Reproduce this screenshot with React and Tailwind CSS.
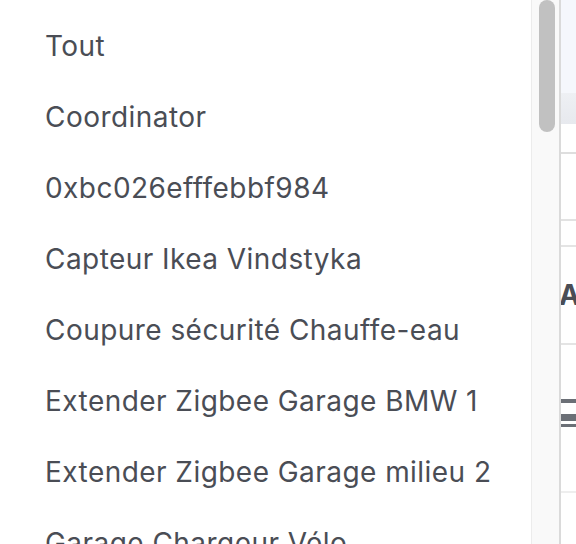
import React from 'react';

const devices = [
  'Tout',
  'Coordinator',
  '0xbc026efffebbf984',
  'Capteur Ikea Vindstyka',
  'Coupure sécurité Chauffe-eau',
  'Extender Zigbee Garage BMW 1',
  'Extender Zigbee Garage milieu 2',
  'Garage Chargeur Vélo',
];

// Dropdown list of devices
function DeviceList() {
  return (
    <ul className="flex-1 pt-[10px] overflow-hidden">
      {devices.map((name) => (
        <li
          key={name}
          className="h-[71px] flex items-center pl-[45px] whitespace-nowrap text-[28px] text-[#4a4d55] tracking-[0.45px]"
        >
          {name}
        </li>
      ))}
    </ul>
  );
}

// Scrollbar of the dropdown
function ScrollTrack() {
  return (
    <div className="w-[30px] shrink-0 bg-[#f9f9f9] border-l border-[#ececec] border-r-2 border-r-[#dadada] pl-[7px]">
      <div className="w-[16px] h-[132px] rounded-full bg-[#c1c1c1]" />
    </div>
  );
}

// Page content peeking out behind the dropdown
function PageEdge() {
  return (
    <div className="w-[15px] shrink-0 flex flex-col overflow-hidden">
      <div className="h-[93px] bg-[#f5f7fc]" />
      <div className="h-[31px] bg-gradient-to-b from-[#eef0f4] to-[#e7e9ee]" />
      <div className="h-[30px] border-b-2 border-[#dedede]" />
      <div className="h-[67px] border-b-2 border-[#e2e2e2]" />
      <div className="h-[26px] border-b-2 border-[#e4e4e4]" />
      <div className="h-[98px] border-b-2 border-[#e4e4e4] flex items-center">
        <span className="-ml-[2px] text-[28px] font-bold leading-none text-[#4a4d55]">A</span>
      </div>
      <div className="h-[148px] border-b-2 border-[#eeeeee] flex flex-col pt-[54px]">
        <div className="h-[4px] bg-[#6b6f76]" />
        <div className="h-[7px] mt-[11px] bg-[#6b6f76]" />
        <div className="h-[3px] mt-[3px] bg-[#6b6f76]" />
      </div>
      <div className="flex-1" />
    </div>
  );
}

export default function App() {
  return (
    <div
      className="flex w-[576px] h-[544px] overflow-hidden bg-white"
      style={{ fontFamily: 'Inter, "Noto Sans", sans-serif' }}
    >
      <DeviceList />
      <ScrollTrack />
      <PageEdge />
    </div>
  );
}
